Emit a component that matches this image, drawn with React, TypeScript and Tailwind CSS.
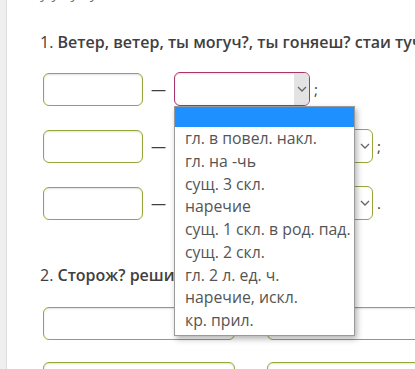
import React from "react";

const Chevron = () => (
  <svg width="10" height="6" viewBox="0 0 10 6" fill="none">
    <path d="M1 1 L5 5 L9 1" stroke="#666" strokeWidth="1.3" />
  </svg>
);

const Input = ({ w }: { w: string }) => (
  <div
    className={`${w} h-[33px] rounded-[6px] border border-[#97a63a] bg-white shadow-[inset_0_1px_2px_rgba(0,0,0,0.12)]`}
  />
);

const options = [
  "гл. в повел. накл.",
  "гл. на -чь",
  "сущ. 3 скл.",
  "наречие",
  "сущ. 1 скл. в род. пад.",
  "сущ. 2 скл.",
  "гл. 2 л. ед. ч.",
  "наречие, искл.",
  "кр. прил.",
];

export default function App() {
  return (
    <div
      className="relative flex h-[369px] w-[415px] overflow-hidden bg-white"
      style={{ fontFamily: "'Open Sans', 'Noto Sans', sans-serif" }}
    >
      <div className="w-[7px] shrink-0 border-r border-[#dcdcdc] bg-[#efefef]" />
      <div className="flex min-w-0 flex-1 flex-col pl-[33px] text-[#404040]">
        <div className="-mt-[19px] h-[22px] whitespace-nowrap text-[15px] leading-[22px] text-[#777]">
          {"   у у ,  у ,    у ,"}
        </div>
        <div className="mt-[28px] whitespace-nowrap text-[16px] leading-[22px]">
          1. <span className="font-semibold">Ветер, ветер, ты могуч?, ты гоняеш? стаи туч</span>
        </div>
        <div className="mt-[19px] flex flex-col gap-[23px] pl-[3px]">
          <div className="flex items-center">
            <Input w="w-[100px]" />
            <span className="mx-[8px] text-[15px]">—</span>
            <div className="relative">
              <div className="flex h-[34px] w-[136px] items-stretch overflow-hidden rounded-[6px] border border-[#a8346c] bg-white shadow-[inset_0_1px_2px_rgba(0,0,0,0.12)]">
                <div className="flex-1" />
                <div className="flex w-[15px] items-center justify-center bg-[#e3e3e3]">
                  <Chevron />
                </div>
              </div>
              <div className="absolute left-0 top-[34px] z-10 w-[181px] border border-[#9a9a9a] bg-white pb-[3px] shadow-[2px_3px_6px_rgba(0,0,0,0.3)]">
                <div className="h-[20px] bg-[#1e90ff]" />
                {options.map((o) => (
                  <div key={o} className="h-[22.75px] whitespace-nowrap pl-[10px] text-[15.8px] leading-[22.75px] text-[#555]">
                    {o}
                  </div>
                ))}
              </div>
            </div>
            <span className="ml-[4px] text-[15px]">;</span>
          </div>
          <div className="flex items-center">
            <Input w="w-[100px]" />
            <span className="mx-[8px] text-[15px]">—</span>
            <div className="flex h-[34px] w-[199px] items-stretch overflow-hidden rounded-[6px] border border-[#97a63a] bg-white">
              <div className="flex-1" />
              <div className="flex w-[15px] items-center justify-center">
                <Chevron />
              </div>
            </div>
            <span className="ml-[4px] text-[15px]">;</span>
          </div>
          <div className="flex items-center">
            <Input w="w-[100px]" />
            <span className="mx-[8px] text-[15px]">—</span>
            <div className="flex h-[34px] w-[199px] items-stretch overflow-hidden rounded-[6px] border border-[#97a63a] bg-white">
              <div className="flex-1" />
              <div className="flex w-[15px] items-center justify-center">
                <Chevron />
              </div>
            </div>
            <span className="ml-[4px] text-[15px]">.</span>
          </div>
        </div>
        <div className="mt-[44px] whitespace-nowrap text-[16px] leading-[22px]">
          2. <span className="font-semibold">Сторож? решил</span>
        </div>
        <div className="mt-[21px] flex flex-col gap-[22px] pl-[3px]">
          <div className="flex items-center gap-[32px]">
            <Input w="w-[192px] shrink-0" />
            <Input w="w-[200px] shrink-0" />
          </div>
          <div className="flex items-center gap-[32px]">
            <Input w="w-[192px] shrink-0" />
            <Input w="w-[200px] shrink-0" />
          </div>
        </div>
      </div>
    </div>
  );
}
